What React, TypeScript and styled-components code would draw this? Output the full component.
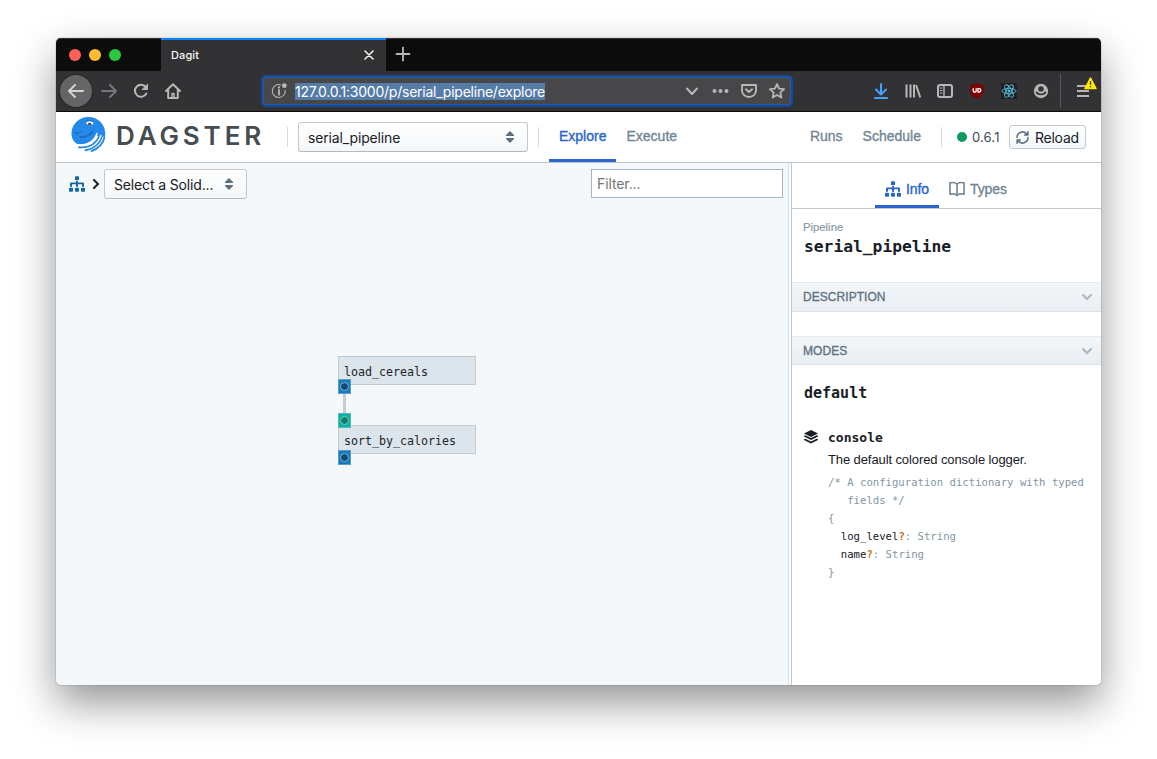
import React from "react";
import styled, { createGlobalStyle } from "styled-components";

const ui = `Inter, "Liberation Sans", sans-serif`;
const helv = `"Liberation Sans", Arial, sans-serif`;
const mono = `"DejaVu Sans Mono", "Liberation Mono", monospace`;

const Global = createGlobalStyle`
  * { box-sizing: border-box; }
  body { margin: 0; background: #fff; font-family: ${helv}; }
  svg { display: block; flex: none; }
  button, input { font: inherit; margin: 0; }
`;

const Desktop = styled.div`
  height: 759px;
  padding: 38px 56px 74px;
  overflow: hidden;
`;
const Window = styled.div`
  height: 647px;
  width: 1045px;
  display: flex;
  flex-direction: column;
  border-radius: 5px;
  overflow: hidden;
  box-shadow: 0 0 1px rgba(0, 0, 0, 0.75), 0 18px 42px rgba(0, 0, 0, 0.42);
`;

/* Browser chrome */
const TabStrip = styled.div`
  height: 33px;
  flex: none;
  display: flex;
  background: #0c0c0d;
  box-shadow: inset 0 1px #333335;
`;
const Lights = styled.div`
  width: 105px;
  padding: 1px 0 0 13px;
  display: flex;
  align-items: center;
  gap: 8px;
`;
const Light = styled.span<{ $c: string }>`
  width: 12px;
  height: 12px;
  border-radius: 50%;
  background: ${(p) => p.$c};
`;
const BrowserTab = styled.div`
  width: 225px;
  border-top: 2px solid #0a84ff;
  background: #323234;
  color: #f9f9fa;
  display: flex;
  align-items: center;
  justify-content: space-between;
  padding: 0 12px 2px 10px;
  font: 500 11px ${ui};
  letter-spacing: 0.1px;
`;
const NewTab = styled.div`
  padding: 8px 0 0 9px;
`;
const BrowserBar = styled.div`
  height: 41px;
  flex: none;
  display: flex;
  align-items: center;
  background: #323234;
  border-bottom: 1px solid #0c0c0d;
  padding-left: 4px;
`;
const Cell = styled.div<{ $round?: boolean }>`
  width: 32px;
  height: 32px;
  flex: none;
  display: flex;
  align-items: center;
  justify-content: center;
  border-radius: 50%;
  ${(p) => p.$round && "background: #656567; box-shadow: 0 0 0 1px #28282a; margin-right: 1px;"}
`;
const UrlBar = styled.div`
  width: 532px;
  height: 32px;
  margin: 0 72px;
  border: 2px solid #174a92;
  border-radius: 5px;
  background: #474749;
  box-shadow: inset 0 0 0 1px #1d5bb5;
  display: flex;
  align-items: center;
  padding: 0 6px 0 8px;
`;
const UrlText = styled.span`
  margin: 1px auto 0 7px;
  background: #557ba7;
  color: #fff;
  font: 400 14px/17px ${ui};
  letter-spacing: -0.24px;
  white-space: nowrap;
  width: 250px;
`;
const UrlIcons = styled.div`
  display: flex;
  align-items: center;
  gap: 12px;
`;
const Separator = styled.div`
  width: 1px;
  height: 34px;
  margin: 0 6px 0 3px;
  background: #57575a;
`;
const MenuCell = styled(Cell)`
  position: relative;
`;
const Badge = styled.svg`
  position: absolute;
  left: 17px;
  top: 2px;
`;

/* Dagit header */
const Header = styled.header`
  height: 51px;
  flex: none;
  display: flex;
  background: #fff;
  border-bottom: 1px solid #bfc5c9;
  padding-left: 15px;
`;
const Logo = styled.div`
  width: 216px;
  display: flex;
  align-items: flex-start;
  padding-top: 5px;
`;
const Wordmark = styled.span`
  margin: 4px 0 0 10px;
  font: 600 26px/29px ${ui};
  letter-spacing: 3.9px;
  color: #464d50;
`;
const Divider = styled.i`
  width: 1px;
  height: 20px;
  flex: none;
  margin-top: 15px;
  background: #dadde0;
`;
const Picker = styled.button<{ $w: number }>`
  width: ${(p) => p.$w}px;
  height: 30px;
  flex: none;
  display: flex;
  align-items: center;
  justify-content: space-between;
  padding: 0 13px 0 9px;
  border: 1px solid #c3c8cc;
  border-bottom-color: #b5babe;
  border-radius: 3px;
  background: linear-gradient(#fff, #f4f7f9);
  color: #182026;
  font: 400 14px ${ui};
  letter-spacing: -0.15px;
`;
const PipelinePicker = styled(Picker)`
  margin: 10px 10px 0;
`;
const NavTab = styled.a<{ $active?: boolean }>`
  height: 50px;
  padding: 0 10px;
  font: 14px/48px ${helv};
  -webkit-text-stroke: 0.35px currentColor;
  color: ${(p) => (p.$active ? "#2965cc" : "#738694")};
  border-bottom: 3px solid ${(p) => (p.$active ? "#2965cc" : "transparent")};
`;
const Tabs = styled.nav`
  display: flex;
  margin-left: 10px;
`;
const RightNav = styled.div`
  display: flex;
  margin-left: auto;
  padding-right: 15px;
`;
const NavDivider = styled(Divider)`
  margin-left: 10px;
`;
const Version = styled.div`
  width: 44px;
  height: 50px;
  display: flex;
  align-items: center;
  gap: 5px;
  margin: 0 8px 0 15px;
  font: 400 13px ${ui};
  letter-spacing: 0.15px;
  color: #394b59;
`;
const Dot = styled.span`
  width: 10px;
  height: 10px;
  border-radius: 50%;
  background: #0f9960;
`;
const Reload = styled.button`
  width: 77px;
  height: 24px;
  margin-top: 13px;
  padding: 1px 0 0 6px;
  display: flex;
  align-items: center;
  gap: 6px;
  border: 1px solid #c3c8cc;
  border-radius: 3px;
  background: linear-gradient(#fff, #f4f7f9);
  color: #182026;
  font: 400 14px ${ui};
  letter-spacing: -0.25px;
`;

/* Body */
const Body = styled.main`
  flex: 1;
  display: flex;
  min-height: 0;
`;
const Explorer = styled.section`
  position: relative;
  width: 733px;
  background: #f4f8fb;
  border-right: 1px solid #d5dfe6;
`;
const ExplorerBar = styled.div`
  display: flex;
  align-items: flex-start;
  padding: 6px 5px 0 13px;
`;
const Crumb = styled.div`
  width: 35px;
  height: 30px;
  display: flex;
  align-items: center;
  gap: 7px;
`;
const Filter = styled.input`
  width: 192px;
  height: 29px;
  margin-left: auto;
  border: 1px solid #a7b6c2;
  background: #fff;
  padding: 0 5px;
  font: 400 14px ${ui};
  letter-spacing: -0.1px;
  outline: none;
  &::placeholder { color: #757575; opacity: 1; }
`;
const Solid = styled.div<{ $y: number }>`
  position: absolute;
  left: 282px;
  top: ${(p) => p.$y}px;
  width: 138px;
  height: 29px;
  border: 1px solid #c4cace;
  background: #dce5ec;
  padding-left: 5px;
  font: 11.65px/30px ${mono};
  color: #202428;
`;
const Port = styled.div<{ $y: number; $in?: boolean }>`
  position: absolute;
  left: 282px;
  top: ${(p) => p.$y}px;
  width: 13px;
  height: 15px;
  border: 1px solid ${(p) => (p.$in ? "#5cb5b4" : "#5f9cc4")};
  background: ${(p) => (p.$in ? "#00b3a4" : "#137cbd")};
  display: flex;
  align-items: center;
  justify-content: center;
  &::after {
    content: "";
    width: 7px;
    height: 7px;
    border-radius: 50%;
    border: 1px solid ${(p) => (p.$in ? "#6fd0c0" : "#7fb4da")};
    background: ${(p) => (p.$in ? "#0e7f6f" : "#0e4c78")};
  }
`;
const Wire = styled.div`
  position: absolute;
  left: 287px;
  top: 230px;
  width: 3px;
  height: 20px;
  background: #c8cccf;
`;
const Gutter = styled.div`
  width: 3px;
  background: #fbfcfd;
  border-right: 1px solid #bcc7cf;
`;
const Sidebar = styled.aside`
  flex: 1;
  background: #fff;
  color: #182026;
`;
const SideTabs = styled.div`
  height: 46px;
  display: flex;
  padding-left: 83px;
  border-bottom: 1px solid #c5c9cc;
`;
const SideTab = styled.a<{ $active?: boolean }>`
  height: 45px;
  display: flex;
  align-items: center;
  gap: 5px;
  padding: 10px 10px 0;
  font: 14px ${helv};
  letter-spacing: -0.1px;
  -webkit-text-stroke: 0.35px currentColor;
  color: ${(p) => (p.$active ? "#2965cc" : "#738694")};
  border-bottom: 3px solid ${(p) => (p.$active ? "#2965cc" : "transparent")};
`;
const Title = styled.div`
  height: 73px;
  padding: 11px 12px 0;
`;
const Kind = styled.div`
  margin-left: -1px;
  font: 11.3px/14px ${helv};
  color: #8a9ba8;
  -webkit-text-stroke: 0.2px currentColor;
`;
const Name = styled.div<{ $size: number }>`
  font: 700 ${(p) => p.$size}px/26px ${mono};
`;
const SectionHead = styled.div<{ $h: number }>`
  height: ${(p) => p.$h}px;
  display: flex;
  align-items: center;
  justify-content: space-between;
  padding: 0 8px 0 11px;
  border-top: 1px solid #e4eaee;
  border-bottom: 1px solid #dbe2e7;
  background: linear-gradient(#f3f6f9, #e9eef2);
  color: #5c7080;
  font: 12px/26px ${helv};
  letter-spacing: 0.05px;
  -webkit-text-stroke: 0.3px currentColor;
`;
const Empty = styled.div`
  height: 24px;
`;
const Mode = styled.div`
  padding: 15px 12px 0;
`;
const Logger = styled.div`
  display: flex;
  gap: 10px;
  margin-top: 21px;
`;
const LoggerIcon = styled.div`
  padding-top: 3px;
`;
const LoggerName = styled.div`
  font: 700 13px/22px ${mono};
`;
const LoggerText = styled.div`
  font: 13px/21px ${helv};
  letter-spacing: -0.1px;
  white-space: nowrap;
`;
const Code = styled.div`
  margin-top: 4px;
`;
const CodeLine = styled.div<{ $indent?: number }>`
  height: 18px;
  padding-left: ${(p) => (p.$indent ?? 0) * 6.4}px;
  font: 10.63px/18px ${mono};
  color: #8296a5;
  white-space: nowrap;
`;
const Key = styled.span`
  color: #182026;
`;
const Optional = styled.span`
  font-weight: 700;
  color: #c87619;
`;

const G = "#b7b7b9";
const stroke = { fill: "none", stroke: "currentColor", strokeWidth: 2, strokeLinecap: "round", strokeLinejoin: "round" } as const;

const Icon = ({ size = 16, c = G, children }: { size?: number; c?: string; children: React.ReactNode }) => (
  <svg width={size} height={size} viewBox="0 0 16 16" color={c} {...stroke}>{children}</svg>
);

const Tree = ({ c }: { c: string }) => (
  <svg width="16" height="16" viewBox="0 0 16 16" fill={c}>
    <rect x="6" y="0.300" width="4" height="4" rx=".8" />
    <rect x="0" y="11.700" width="4" height="4" rx=".8" />
    <rect x="6" y="11.700" width="4" height="4" rx=".8" />
    <rect x="12" y="11.700" width="4" height="4" rx=".8" />
    <path d="M7.100 5h1.800v1.500H14q1 0 1 1V10.800h-2V8.300H9v2.500H7V8.300H3v2.500H1V7.500q0-1 1-1h5.100z" />
  </svg>
);
const Carets = () => (
  <svg width="8" height="12" viewBox="0 0 8 12" fill="#5c7080">
    <path d="M4 0l4 4q.2 1-.6 1H.6Q-.2 5 0 4zM4 12l4-4q.2-1-.6-1H.6Q-.2 7 0 8z" />
  </svg>
);
const Chevron = () => (
  <svg width="12" height="8" viewBox="0 0 12 8" fill="none" stroke="#a7b6c2" strokeWidth="2" strokeLinecap="round">
    <path d="M2 2l4 4 4-4" />
  </svg>
);
const Octopus = () => (
  <svg width="35" height="35" viewBox="0 0 35 35" fill="none" stroke="#2a8be6" strokeWidth="1.900" strokeLinecap="round">
    <path stroke="none" fill="#2489e8" d="M.5 18C-.2 7.500 8 0 17.200 0 27 0 34.300 7 34.300 17c0 2-.6 3.500-1.300 4-1.500-1-3-2-4.500-3-1 .8-2 1-3 .8C21 25 13 28.500 6 27 3 25 .8 22 .5 18z" />
    <path stroke="#1b6cc4" strokeWidth="1.800" d="M9 20c6 .5 10-1.500 12.500-5.500" />
    <path stroke="#1a5ba5" strokeWidth="1" d="M3.500 15.300c1.500 1.400 2.800 1.500 4.300.6M9.300 14.800l.9-.7" />
    <path stroke="#fff" strokeWidth="1.400" d="M7 28C16 29 23 25 26 16.500" />
    <path d="M8 30.200C17.500 31.500 25.500 27 28.500 18" />
    <path stroke="#fff" strokeWidth="1.300" d="M11 32C20.500 32 27.500 27 29.900 18.500" />
    <path d="M14.500 33.200c7.700-1 14.200-6 16.800-13.700" />
    <path stroke="#fff" strokeWidth="1.100" d="M18 34C25 32 30.500 27 32.400 20" />
    <path d="M20.500 34C27.500 31.500 32 27 33.400 20.500" />
    <ellipse cx="18.800" cy="6" rx="3.500" ry="1.800" fill="#fff" stroke="none" />
    <ellipse cx="18.600" cy="6.900" rx="1.700" ry="1.200" fill="#54493a" stroke="none" />
    <path d="M15 4.300c2-1.300 5-1.300 7 .3" strokeWidth="1" stroke="#1b6cc4" />
  </svg>
);

export default function App() {
  return (
    <Desktop>
      <Global />
      <Window>
        <TabStrip>
          <Lights>
            <Light $c="#ff5f57" />
            <Light $c="#ffbd2e" />
            <Light $c="#28c940" />
          </Lights>
          <BrowserTab>
            Dagit
            <svg width="10" height="10" viewBox="0 0 10 10" stroke="#f0f0f1" strokeWidth="1.6" strokeLinecap="round"><path d="M1 1l8 8M9 1L1 9" /></svg>
          </BrowserTab>
          <NewTab>
            <svg width="16" height="16" viewBox="0 0 16 16" stroke={G} strokeWidth="1.8" strokeLinecap="round"><path d="M8 1.500v13M1.500 8h13" /></svg>
          </NewTab>
        </TabStrip>
        <BrowserBar>
          <Cell $round><Icon c="#d4d4d5"><path d="M15 8H1.500M7 2L1 8l6 6" /></Icon></Cell>
          <Cell><Icon c="#77777a"><path d="M1 8h13.500M9 2l6 6-6 6" /></Icon></Cell>
          <Cell><Icon><path d="M13.300 10.500A6 6 0 1 1 12.600 4" /><path d="M14.500 1.500v5h-5z" fill="currentColor" strokeWidth="1" /></Icon></Cell>
          <Cell><Icon><path d="M1 8l7-6.700L15 8M3.200 7v8h9.600V7" /><path d="M7 14.500v-4h2v4" strokeWidth="1.500" /></Icon></Cell>
          <UrlBar>
            <svg width="17" height="16" viewBox="0 0 17 16" fill="none" stroke={G} strokeWidth="1.100">
              <path d="M10 1.900A6.500 6.500 0 1 0 14.200 7" />
              <path d="M8 7v4.700" strokeWidth="1.800" strokeLinecap="round" />
              <circle cx="8" cy="4.400" r="1.100" fill={G} stroke="none" />
              <circle cx="13.300" cy="2.700" r="2.400" fill={G} stroke="none" />
            </svg>
            <UrlText>127.0.0.1:3000/p/serial_pipeline/explore</UrlText>
            <UrlIcons>
              <Icon><path d="M3 5.500L8 11l5-5.500" /></Icon>
              <svg width="17" height="16" viewBox="0 0 17 16" fill={G}><circle cx="2.500" cy="8" r="2" /><circle cx="8.500" cy="8" r="2" /><circle cx="14.500" cy="8" r="2" /></svg>
              <Icon><path d="M1 2h14v5.500a7 6.500 0 0 1-14 0z" strokeWidth="1.900" /><path d="M5 6.300L8 9l3-2.700" /></Icon>
              <Icon><path d="M8 1l2.100 4.700 5 .5-3.800 3.400 1.100 5L8 12l-4.400 2.600 1.100-5L.9 6.200l5-.5z" strokeWidth="1.800" /></Icon>
            </UrlIcons>
          </UrlBar>
          <Cell><Icon c="#45a1ff"><path d="M8 1v10M3 6.500l5 5 5-5M2 15h12" /></Icon></Cell>
          <Cell><Icon><path d="M1.500 1.500v13M5.500 1.500v13M9 1.500v13M11 2L15.300 14.500" strokeLinecap="butt" /></Icon></Cell>
          <Cell><Icon><rect x="1" y="2" width="14" height="12" rx="2" /><path d="M7 2v12" strokeWidth="1.400" /><path d="M3.300 5h1.700M3.300 7.500h1.700M3.300 10h1.700" strokeWidth="1" /></Icon></Cell>
          <Cell>
            <svg width="16" height="16" viewBox="0 0 16 16">
              <path d="M8 .3c2 1.300 4 1.700 6.700 1.800v6.400c0 3.200-3 5.700-6.700 7.200-3.700-1.500-6.700-4-6.700-7.200V2.100C4 2 6 1.600 8 .3z" fill="#800000" stroke="#5d1a1e" strokeWidth=".5" />
              <path d="M4.200 5.200v2.600q0 1.200 1.200 1.200h.6q1.200 0 1.200-1.200V5.200M9 5.700v3.300h1q1.900 0 1.900-1.650T10 5.700z" fill="none" stroke="#fff" strokeWidth="1.300" />
            </svg>
          </Cell>
          <Cell>
            <svg width="16" height="16" viewBox="0 0 16 16">
              <path fill="#202023" d="M0 0h16v16H0z" />
              <g fill="none" stroke="#53c1de" strokeWidth=".9">
                <ellipse cx="8" cy="8" rx="7" ry="2.700" />
                <ellipse cx="8" cy="8" rx="7" ry="2.700" transform="rotate(60 8 8)" />
                <ellipse cx="8" cy="8" rx="7" ry="2.700" transform="rotate(120 8 8)" />
              </g>
              <circle cx="8" cy="8" r="1.500" fill="#53c1de" />
            </svg>
          </Cell>
          <Cell>
            <svg width="16" height="16" viewBox="0 0 16 16" fill={G}>
              <circle cx="8" cy="8" r="7.200" />
              <circle cx="8" cy="5.900" r="2.700" fill="#323234" />
              <path d="M3.300 8.800C4.500 12.400 11.500 12.400 12.700 8.800" fill="none" stroke="#323234" strokeWidth="1.700" />
            </svg>
          </Cell>
          <Separator />
          <MenuCell>
            <Icon><path d="M2 3h11M2 8h12M2 13h12" strokeLinecap="butt" /></Icon>
            <Badge width="13" height="13" viewBox="0 0 13 13">
              <path d="M6.500 1L12 11.500H1z" fill="#ffe900" stroke="#ffe900" strokeWidth="1.500" strokeLinejoin="round" />
              <path d="M6.500 4.300v3.400M6.500 9v1.300" stroke="#3e2800" strokeWidth="1.300" />
            </Badge>
          </MenuCell>
        </BrowserBar>

        <Header>
          <Logo><Octopus /><Wordmark>DAGSTER</Wordmark></Logo>
          <Divider />
          <PipelinePicker $w={230}>serial_pipeline<Carets /></PipelinePicker>
          <Divider />
          <Tabs>
            <NavTab $active>Explore</NavTab>
            <NavTab>Execute</NavTab>
          </Tabs>
          <RightNav>
            <NavTab>Runs</NavTab>
            <NavTab>Schedule</NavTab>
            <NavDivider />
            <Version><Dot />0.6.1</Version>
            <Reload>
              <svg width="13" height="13" viewBox="0 0 16 16" fill="none" stroke="#5c7080" strokeWidth="1.900" strokeLinecap="round" strokeLinejoin="round">
                <path d="M1.200 8A6.800 6.800 0 0 1 13.500 4M14.800 8A6.800 6.800 0 0 1 2.500 12M14.600 1v4h-4M1.400 15v-4h4" />
              </svg>
              Reload
            </Reload>
          </RightNav>
        </Header>

        <Body>
          <Explorer>
            <ExplorerBar>
              <Crumb>
                <Tree c="#106ba3" />
                <svg width="8" height="10" viewBox="0 0 8 10" fill="none" stroke="#182026" strokeWidth="2" strokeLinecap="round"><path d="M2 1l4 4-4 4" /></svg>
              </Crumb>
              <Picker $w={143}>Select a Solid...<Carets /></Picker>
              <Filter placeholder="Filter..." />
            </ExplorerBar>
            <Wire />
            <Solid $y={193}>load_cereals</Solid>
            <Solid $y={262}>sort_by_calories</Solid>
            <Port $y={216} />
            <Port $y={250} $in />
            <Port $y={287} />
          </Explorer>
          <Gutter />
          <Sidebar>
            <SideTabs>
              <SideTab $active><Tree c="#2965cc" />Info</SideTab>
              <SideTab>
                <svg width="16" height="16" viewBox="0 0 17 16" fill="none" stroke="#738694" strokeWidth="1.700" strokeLinejoin="round">
                  <path d="M8.500 3C7 1 3.500 1 1 1.500v12c2.500-.5 6-.5 7.500 1.500 1.500-2 5-2 7.500-1.500v-12C13.500 1 10 1 8.500 3zv12" />
                </svg>
                Types
              </SideTab>
            </SideTabs>
            <Title>
              <Kind>Pipeline</Kind>
              <Name $size={16.3}>serial_pipeline</Name>
            </Title>
            <SectionHead $h={30}>DESCRIPTION<Chevron /></SectionHead>
            <Empty />
            <SectionHead $h={29}>MODES<Chevron /></SectionHead>
            <Mode>
              <Name $size={15}>default</Name>
              <Logger>
                <LoggerIcon>
                  <svg width="14" height="14" viewBox="0 0 16 16" fill="#182026">
                    <path d="M8 0l8 4-8 4-8-4z" />
                    <path d="M0 6.500l1.500-.5L8 9.200 14.500 6l1.500.5v1L8 11.500l-8-4z" />
                    <path d="M0 10.500l1.500-.5L8 13.200l6.500-3.200 1.500.5v1l-8 4-8-4z" />
                  </svg>
                </LoggerIcon>
                <div>
                  <LoggerName>console</LoggerName>
                  <LoggerText>The default colored console logger.</LoggerText>
                  <Code>
                    <CodeLine>/* A configuration dictionary with typed</CodeLine>
                    <CodeLine $indent={3}>fields */</CodeLine>
                    <CodeLine>{"{"}</CodeLine>
                    <CodeLine $indent={2}><Key>log_level</Key><Optional>?</Optional>: String</CodeLine>
                    <CodeLine $indent={2}><Key>name</Key><Optional>?</Optional>: String</CodeLine>
                    <CodeLine>{"}"}</CodeLine>
                  </Code>
                </div>
              </Logger>
            </Mode>
          </Sidebar>
        </Body>
      </Window>
    </Desktop>
  );
}
